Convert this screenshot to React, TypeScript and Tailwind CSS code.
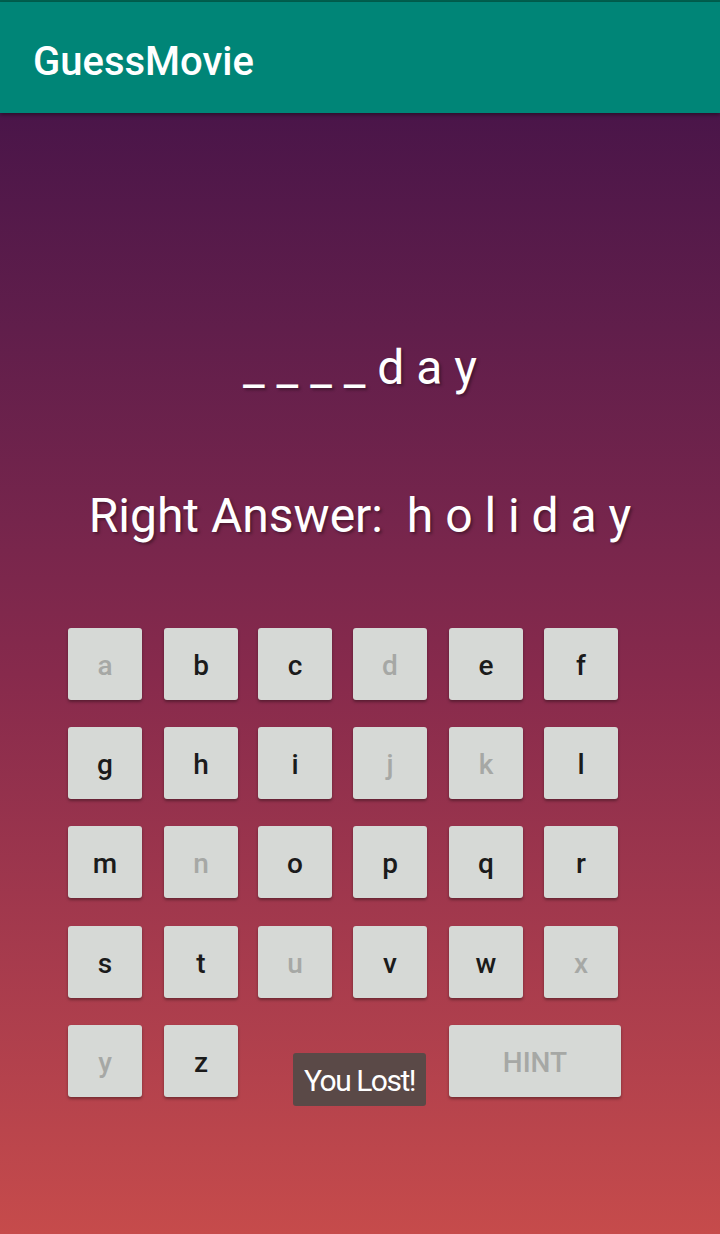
import React from 'react';

// Letters shown on the keyboard, with the ones already used greyed out
const rows: { ch: string; used: boolean }[][] = [
  [
    { ch: 'a', used: true },
    { ch: 'b', used: false },
    { ch: 'c', used: false },
    { ch: 'd', used: true },
    { ch: 'e', used: false },
    { ch: 'f', used: false },
  ],
  [
    { ch: 'g', used: false },
    { ch: 'h', used: false },
    { ch: 'i', used: false },
    { ch: 'j', used: true },
    { ch: 'k', used: true },
    { ch: 'l', used: false },
  ],
  [
    { ch: 'm', used: false },
    { ch: 'n', used: true },
    { ch: 'o', used: false },
    { ch: 'p', used: false },
    { ch: 'q', used: false },
    { ch: 'r', used: false },
  ],
  [
    { ch: 's', used: false },
    { ch: 't', used: false },
    { ch: 'u', used: true },
    { ch: 'v', used: false },
    { ch: 'w', used: false },
    { ch: 'x', used: true },
  ],
];

const Key: React.FC<{ ch: string; used?: boolean; wide?: boolean }> = ({ ch, used = false, wide = false }) => (
  <button
    className={`h-[72px] ${wide ? 'col-span-2 w-[172px]' : 'w-[74px]'} rounded-[3px] bg-[#d6d9d6] shadow-[0_2px_3px_rgba(0,0,0,0.35)] flex items-center justify-center pt-[4px] text-[28px] font-medium ${
      used ? 'text-[#a6a8a5]' : 'text-[#1b1b1b]'
    }`}
  >
    {ch}
  </button>
);

const App: React.FC = () => {
  return (
    <div className="w-[720px] h-[1234px] relative overflow-hidden font-['Roboto',sans-serif]">
      {/* App bar */}
      <div className="h-[2px] bg-[#00604f]" />
      <div className="h-[111px] bg-[#008577] flex items-center pl-[33px] shadow-[0_2px_4px_rgba(0,0,0,0.4)] relative z-10">
        <h1 className="text-white text-[40px] font-medium leading-none pt-[8px]">GuessMovie</h1>
      </div>

      {/* Game area */}
      <div className="h-[1121px] bg-gradient-to-b from-[#4a1549] via-[#872a4c] to-[#c64b4b] flex flex-col">
        <p className="pt-[227px] text-center text-white text-[48px] leading-[56px] whitespace-pre [text-shadow:2px_2px_3px_rgba(0,0,0,0.35)]">
          _ _ _ _ d a y
        </p>
        <p className="mt-[92px] text-center text-white text-[48px] leading-[56px] whitespace-pre [text-shadow:2px_2px_3px_rgba(0,0,0,0.35)]">
          Right Answer:  h o l i d a y
        </p>

        <div className="mt-[84px] pl-[68px] grid grid-cols-[96px_94px_95px_96px_95px_77px] grid-rows-[99px_99px_100px_99px_72px]">
          {rows.map((row) => row.map((k) => <Key key={k.ch} ch={k.ch} used={k.used} />))}
          <Key ch="y" used />
          <Key ch="z" />
          <div />
          <div />
          <Key ch="HINT" used wide />
        </div>
      </div>

      {/* Toast */}
      <div className="absolute left-[293px] top-[1053px] w-[133px] h-[53px] rounded-[3px] bg-[#5a4947] flex items-center justify-center">
        <span className="text-white text-[30px] tracking-[-1.5px] leading-none pt-[2px]">You Lost!</span>
      </div>
    </div>
  );
};

export default App;
